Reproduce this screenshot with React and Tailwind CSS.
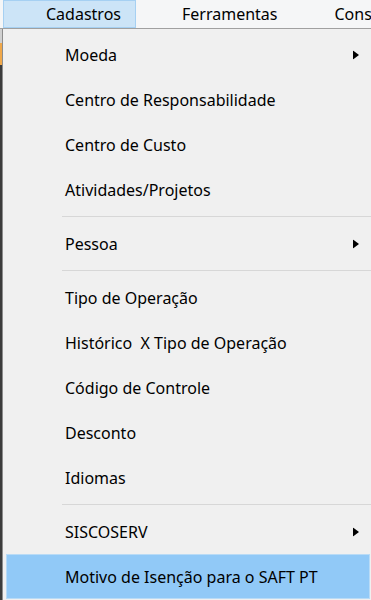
import React from "react";

const Arrow = () => (
  <svg width="6" height="9" viewBox="0 0 6 9" className="absolute right-[12px] top-1/2 -translate-y-1/2">
    <path d="M0 0 L6 4.5 L0 9 Z" fill="#000" />
  </svg>
);

const Item = ({ label, sub, active }) => (
  <div
    className={
      "relative flex items-center h-[45px] whitespace-pre " +
      (active ? "bg-[#91c9f7] border border-[#b9dbf6] ml-[3px] mr-[1px] pl-[58px]" : "pl-[62px]")
    }
  >
    <span>{label}</span>
    {sub && <Arrow />}
  </div>
);

const Sep = () => (
  <div className="h-[9px] flex items-center pl-[59px]">
    <div className="h-px w-full bg-[#d7d7d7]" />
  </div>
);

export default function App() {
  return (
    <div
      className="w-[371px] h-[600px] overflow-hidden flex flex-col bg-[#f0f0f0] text-[#000] text-[16px]"
      style={{ fontFamily: '"Noto Sans", sans-serif' }}
    >
      {/* Menu bar */}
      <div className="h-[29px] flex items-stretch bg-[#f5f6f7] border-b border-[#a0a0a0] shrink-0 whitespace-nowrap">
        <div className="ml-[3px] w-[133px] shrink-0 bg-[#cce4f7] border border-[#a6d0f2] flex items-center pl-[42px]">
          Cadastros
        </div>
        <div className="w-[46px] shrink-0" />
        <div className="flex items-center shrink-0">Ferramentas</div>
        <div className="flex items-center ml-[57px] shrink-0">Consultas</div>
      </div>

      <div className="flex flex-1 min-h-0">
        {/* what lies behind the menu */}
        <div className="w-[2px] flex flex-col shrink-0">
          <div className="h-[14px] bg-[#d0d0d0]" />
          <div className="h-[22px] bg-[#f0a84a]" />
          <div className="flex-1 bg-[#3c3c3c]" />
        </div>

        {/* Dropdown */}
        <div className="flex-1 border-l border-[#8c8c8c] pt-[3px] flex flex-col">
          <Item label="Moeda" sub />
          <Item label="Centro de Responsabilidade" />
          <Item label="Centro de Custo" />
          <Item label="Atividades/Projetos" />
          <Sep />
          <Item label="Pessoa" sub />
          <Sep />
          <Item label="Tipo de Operação" />
          <Item label="Histórico  X Tipo de Operação" />
          <Item label="Código de Controle" />
          <Item label="Desconto" />
          <Item label="Idiomas" />
          <Sep />
          <Item label="SISCOSERV" sub />
          <Item label="Motivo de Isenção para o SAFT PT" active />
        </div>
      </div>
    </div>
  );
}
